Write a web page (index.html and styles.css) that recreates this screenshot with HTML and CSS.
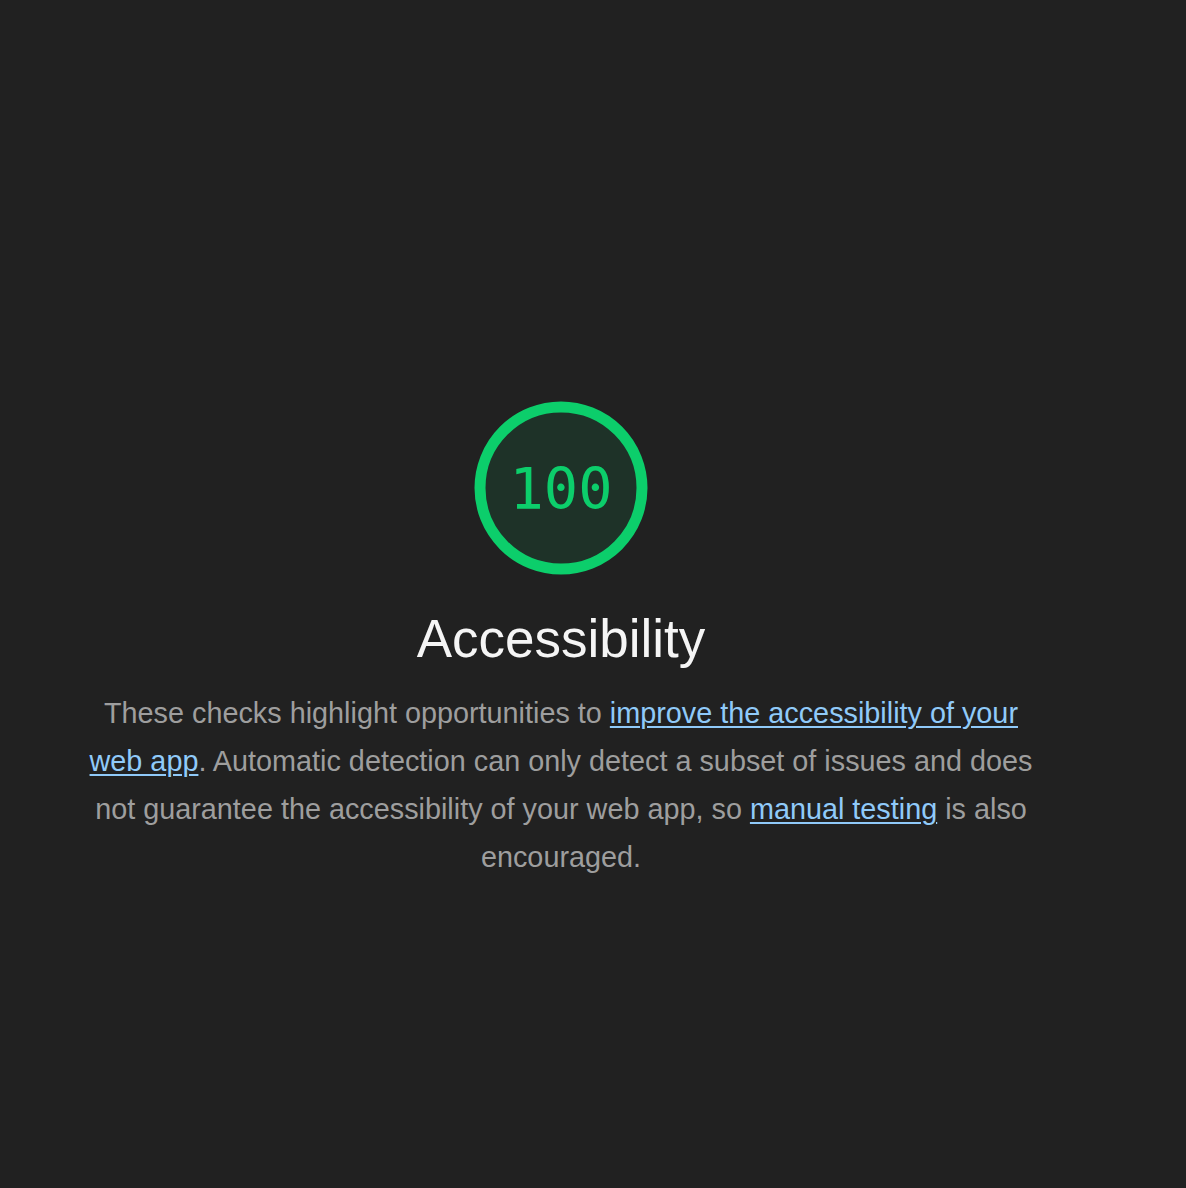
FILE: index.html
```html
<!DOCTYPE html>
<html lang="en">
<head>
<meta charset="utf-8">
<title>Accessibility</title>
<link rel="stylesheet" href="styles.css">
</head>
<body>
<main class="page">
  <section class="category">
    <div class="gauge">
      <svg class="gauge-svg" viewBox="0 0 174 174" width="174" height="174" aria-hidden="true">
        <circle cx="87" cy="87" r="81" fill="#1e3228" stroke="#0cce6b" stroke-width="11"/>
      </svg>
      <span class="gauge-value">100</span>
    </div>
    <h1 class="title">Accessibility</h1>
    <p class="desc">These checks highlight opportunities to <a href="#" class="link">improve the accessibility of your web app</a>. Automatic detection can only detect a subset of issues and does not guarantee the accessibility of your web app, so <a href="#" class="link">manual testing</a> is also encouraged.</p>
  </section>
</main>
</body>
</html>
```
FILE: styles.css
```css
html, body {
  margin: 0;
  padding: 0;
  background: #212121;
}
.page {
  width: 1122px;
  height: 1188px;
  display: flex;
  justify-content: center;
  align-items: flex-start;
}
.category {
  display: flex;
  flex-direction: column;
  align-items: center;
  padding-top: 401px;
}
.gauge {
  position: relative;
  width: 174px;
  height: 174px;
}
.gauge-svg {
  display: block;
}
.gauge-value {
  position: absolute;
  inset: 0;
  display: flex;
  align-items: center;
  justify-content: center;
  padding-top: 2px;
  font-family: "DejaVu Sans Mono", monospace;
  font-size: 57px;
  color: #0cce6b;
}
.title {
  margin: 34px 0 0;
  font-family: "Liberation Sans", Arial, sans-serif;
  font-weight: 400;
  font-size: 53px;
  line-height: 60px;
  color: #f5f5f5;
}
.desc {
  width: 960px;
  margin: 20px 0 0;
  text-align: center;
  font-family: "Liberation Sans", Arial, sans-serif;
  font-size: 28.8px;
  line-height: 48px;
  color: #9e9e9e;
}
.link {
  color: #90caf9;
  text-decoration: underline;
  text-decoration-thickness: 1.5px;
  text-underline-offset: 3px;
}
```
